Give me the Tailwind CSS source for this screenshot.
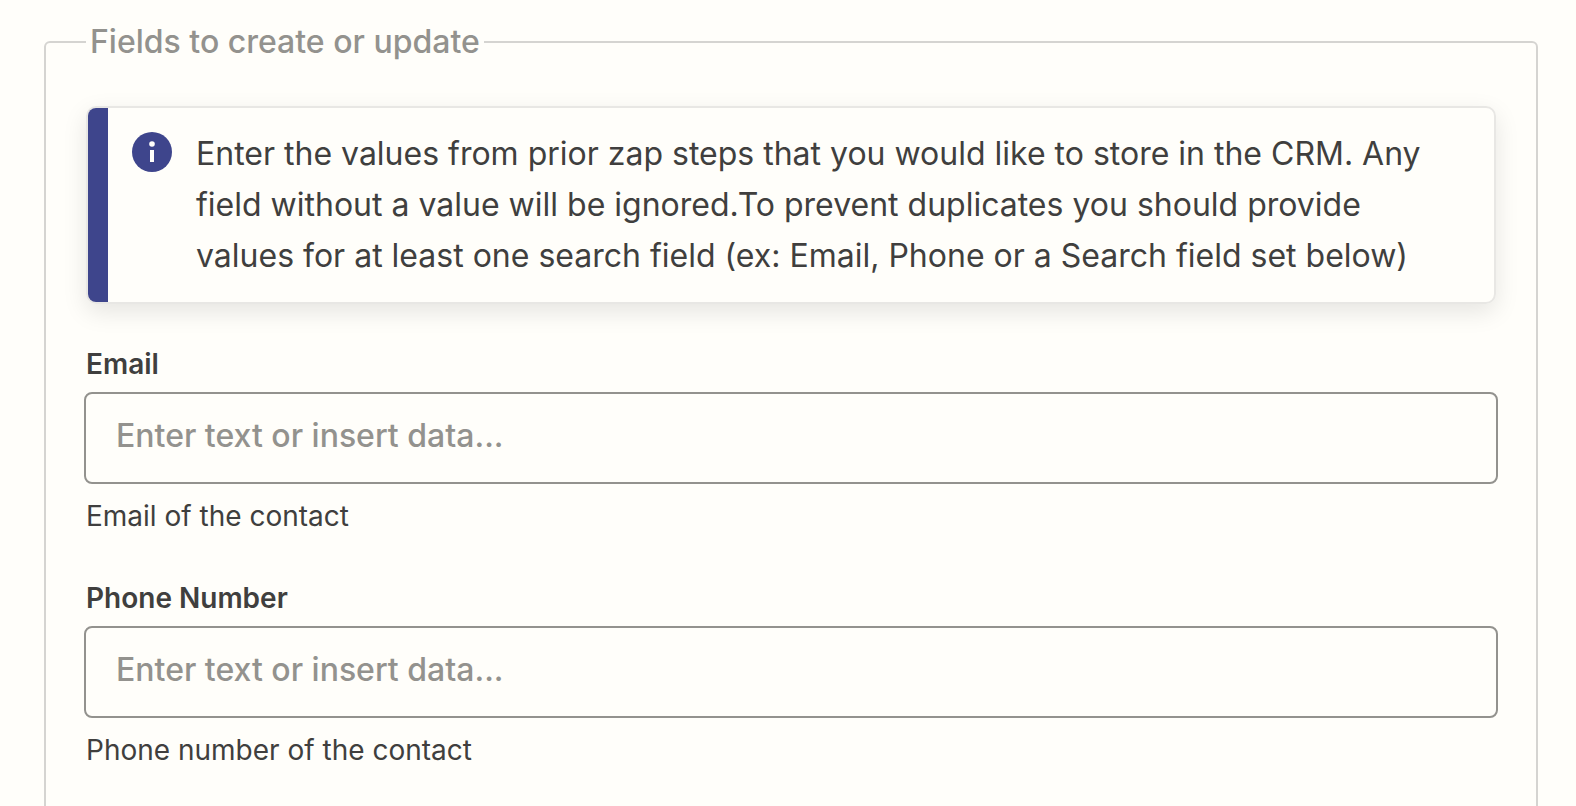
<!DOCTYPE html>
<html lang="en">
<head>
<meta charset="utf-8">
<title>Fields to create or update</title>
<script src="https://cdn.jsdelivr.net/npm/@tailwindcss/browser@4"></script>
</head>
<body class="bg-[#fffefa] font-['Inter',sans-serif] text-[#403f3e]">
<main class="h-screen overflow-hidden pt-[22px] pr-[38px] pl-11">
  <form>
    <fieldset class="min-w-0 rounded-md border-2 border-[#d5d4d1] px-10 pt-11 pb-20">
      <legend class="px-1 text-[32px] leading-10 font-medium text-[#93928e]">Fields to create or update</legend>

      <div class="flex overflow-hidden rounded-[10px] border-2 border-[#e8e7e4] shadow-[0_8px_24px_0_rgba(0,0,0,0.1)]" role="note">
        <div class="w-5 shrink-0 bg-[#3e458c]"></div>
        <div class="flex flex-1 gap-6 pt-5 pr-10 pb-[21px] pl-6">
          <svg class="mt-1 size-10 shrink-0" viewBox="0 0 40 40" aria-hidden="true">
            <circle cx="20" cy="20" r="20" fill="#3e458c"/>
            <circle cx="20" cy="12" r="2.8" fill="#fffefa"/>
            <rect x="18" y="18" width="4" height="12" fill="#fffefa"/>
          </svg>
          <p class="flex-1 text-[32px] leading-[51px]">Enter the values from prior zap steps that you would like to store in the CRM. Any field without a value will be ignored.To prevent duplicates you should provide values for at least one search field (ex: Email, Phone or a Search field set below)</p>
        </div>
      </div>

      <div class="mt-10 flex flex-col gap-[42px]">
        <div class="flex flex-col">
          <label for="email" class="mb-2 text-[28px] leading-10 font-semibold">Email</label>
          <input id="email" type="email" aria-describedby="email-help" placeholder="Enter text or insert data..." class="-mx-0.5 h-[92px] rounded-lg border-2 border-[#93928e] bg-[#fffefa] px-[30px] pb-1.5 text-[32px] font-medium placeholder:text-[#93928e]">
          <p id="email-help" class="mt-3 text-[28px] leading-10">Email of the contact</p>
        </div>
        <div class="flex flex-col">
          <label for="phone" class="mb-2 text-[28px] leading-10 font-semibold">Phone Number</label>
          <input id="phone" type="tel" aria-describedby="phone-help" placeholder="Enter text or insert data..." class="-mx-0.5 h-[92px] rounded-lg border-2 border-[#93928e] bg-[#fffefa] px-[30px] pb-1.5 text-[32px] font-medium placeholder:text-[#93928e]">
          <p id="phone-help" class="mt-3 text-[28px] leading-10">Phone number of the contact</p>
        </div>
      </div>
    </fieldset>
  </form>
</main>
</body>
</html>
